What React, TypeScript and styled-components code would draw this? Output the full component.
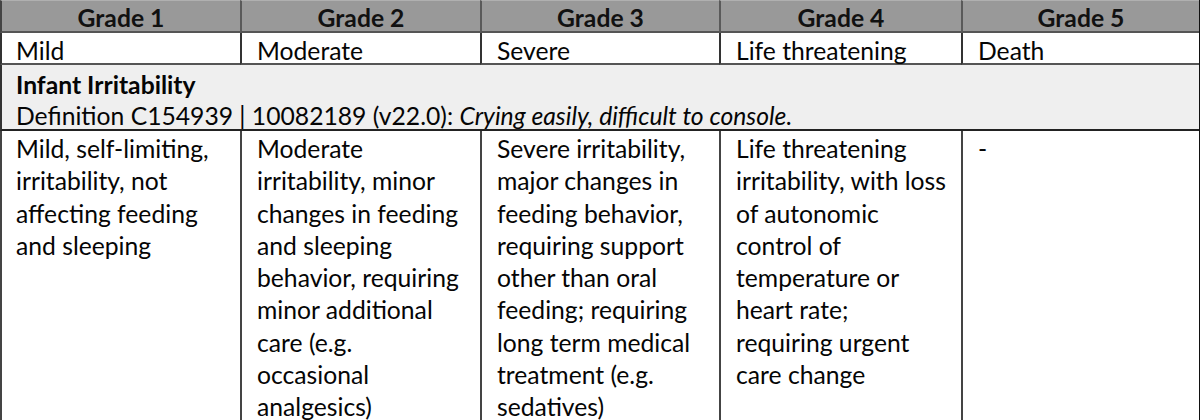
import React from "react";
import styled, { createGlobalStyle } from "styled-components";

const GlobalStyle = createGlobalStyle`
  html, body {
    margin: 0;
    padding: 0;
    background: #ffffff;
  }
  body {
    font-family: Lato, "Open Sans", sans-serif;
    color: #050505;
  }
`;

const grades = ["Grade 1", "Grade 2", "Grade 3", "Grade 4", "Grade 5"];
const severities = ["Mild", "Moderate", "Severe", "Life threatening", "Death"];

// line breaks kept as in the source document
const descriptions: string[][] = [
  ["Mild, self-limiting,", "irritability, not", "affecting feeding", "and sleeping"],
  [
    "Moderate",
    "irritability, minor",
    "changes in feeding",
    "and sleeping",
    "behavior, requiring",
    "minor additional",
    "care (e.g.",
    "occasional",
    "analgesics)",
  ],
  [
    "Severe irritability,",
    "major changes in",
    "feeding behavior,",
    "requiring support",
    "other than oral",
    "feeding; requiring",
    "long term medical",
    "treatment (e.g.",
    "sedatives)",
  ],
  [
    "Life threatening",
    "irritability, with loss",
    "of autonomic",
    "control of",
    "temperature or",
    "heart rate;",
    "requiring urgent",
    "care change",
  ],
  ["-"],
];

const App = () => {
  return (
    <>
      <GlobalStyle />
      <Table>
        {grades.map((g, i) => (
          <HeaderCell key={g} first={i === 0}>
            {g}
          </HeaderCell>
        ))}
        {severities.map((s, i) => (
          <SeverityCell key={s} first={i === 0}>
            {s}
          </SeverityCell>
        ))}
        <TermBand>
          <TermTitle>Infant Irritability</TermTitle>
          <TermDefinition>
            Definition C154939 | 10082189 (v22.0): <em>Crying easily, difficult to console.</em>
          </TermDefinition>
        </TermBand>
        {descriptions.map((lines, i) => (
          <DescriptionCell key={i} first={i === 0}>
            {lines.map((line) => (
              <Line key={line}>{line}</Line>
            ))}
          </DescriptionCell>
        ))}
      </Table>
    </>
  );
};

const Table = styled.div`
  display: grid;
  grid-template-columns: 240px 240px 239px 242px 238px;
  width: 1199px;
  border-right: 1px solid #111111;
  font-size: 24.7px;
`;

const HeaderCell = styled.div<{ first?: boolean }>`
  height: 33px;
  box-sizing: border-box;
  background: #999999;
  border-top: 1px solid #b0b0b0;
  border-bottom: 2px solid #555555;
  border-left: ${(p) => (p.first ? "2px solid #444444" : "2px solid #5a5a5a")};
  font-weight: 700;
  text-align: center;
  line-height: 33px;
  color: #111111;
`;

const SeverityCell = styled.div<{ first?: boolean }>`
  height: 32px;
  box-sizing: border-box;
  padding-left: ${(p) => (p.first ? "14px" : "15px")};
  border-left: 2px solid #333333;
  border-bottom: 2px solid #555555;
  line-height: 35px;
`;

const TermBand = styled.div`
  grid-column: 1 / -1;
  height: 66px;
  box-sizing: border-box;
  background: #efefef;
  border-left: 2px solid #333333;
  border-bottom: 2px solid #222222;
  padding: 0 0 0 14px;
`;

const TermTitle = styled.div`
  font-weight: 700;
  line-height: 32px;
  padding-top: 4px;
`;

const TermDefinition = styled.div`
  line-height: 30px;

  em {
    font-style: italic;
  }
`;

const DescriptionCell = styled.div<{ first?: boolean }>`
  border-left: 2px solid #444444;
  padding: 2px 0 0 ${(p) => (p.first ? "14px" : "15px")};
  min-height: 300px;
`;

const Line = styled.div`
  line-height: 32.3px;
  white-space: nowrap;
`;

export default App;
